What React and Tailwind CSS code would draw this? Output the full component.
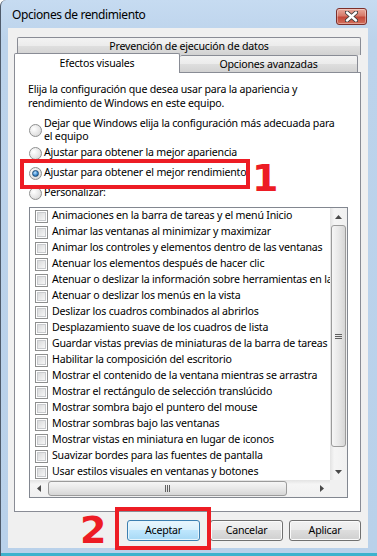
const items = [
  'Animaciones en la barra de tareas y el menú Inicio',
  'Animar las ventanas al minimizar y maximizar',
  'Animar los controles y elementos dentro de las ventanas',
  'Atenuar los elementos después de hacer clic',
  'Atenuar o deslizar la información sobre herramientas en la vista',
  'Atenuar o deslizar los menús en la vista',
  'Deslizar los cuadros combinados al abrirlos',
  'Desplazamiento suave de los cuadros de lista',
  'Guardar vistas previas de miniaturas de la barra de tareas',
  'Habilitar la composición del escritorio',
  'Mostrar el contenido de la ventana mientras se arrastra',
  'Mostrar el rectángulo de selección translúcido',
  'Mostrar sombra bajo el puntero del mouse',
  'Mostrar sombras bajo las ventanas',
  'Mostrar vistas en miniatura en lugar de iconos',
  'Suavizar bordes para las fuentes de pantalla',
  'Usar estilos visuales en ventanas y botones',
]

const Radio = ({ checked }) => (
  <span className="flex h-[13px] w-[13px] shrink-0 items-center justify-center rounded-full border border-[#8e8f8f] bg-[radial-gradient(circle_at_35%_35%,#ffffff,#e6e6e6_55%,#cdcdcd)]">
    {checked && (
      <span className="h-[7px] w-[7px] rounded-full border border-[#1d4d78] bg-[radial-gradient(circle_at_40%_35%,#c4e6ff,#3c8bd2_55%,#184a77)]" />
    )}
  </span>
)

const Checkbox = () => (
  <span className="flex h-[13px] w-[13px] shrink-0 items-center justify-center border border-[#8e8f8f] bg-white">
    <span className="h-[9px] w-[9px] border border-[#c9cbce] bg-[linear-gradient(135deg,#d9dadb,#f7f7f7)]" />
  </span>
)

const Arrow = ({ dir }) => {
  const pts = {
    up: '0,4 3.5,0 7,4',
    down: '0,0 3.5,4 7,0',
    left: '4,0 0,3.5 4,7',
    right: '0,0 4,3.5 0,7',
  }[dir]
  const vertical = dir === 'up' || dir === 'down'
  return (
    <svg width={vertical ? 7 : 4} height={vertical ? 4 : 7} viewBox={vertical ? '0 0 7 4' : '0 0 4 7'}>
      <polygon points={pts} fill="#4a4a4a" />
    </svg>
  )
}

export default function App() {
  return (
    <div className="relative flex h-[556px] w-[377px] flex-col overflow-hidden rounded-tl-[6px] border-l border-[#4f5b6b] bg-[linear-gradient(#c6dbf1,#bcd3eb_40px,#b9d1ea)] font-['Noto_Sans',sans-serif] text-[10.6px] tracking-[-0.2px] text-black">
      {/* title bar */}
      <div className="flex h-[28px] shrink-0 justify-between">
        <span className="pl-[11px] pt-[6px] text-[12px] leading-[18px] tracking-[-0.4px]">Opciones de rendimiento</span>
        <div className="mr-[10px] mt-[8px] flex h-[17px] w-[31px] items-center justify-center rounded-[3px] border border-[#7d2f2a] bg-[linear-gradient(#e9a99c,#d67a6a_45%,#c4483a_55%,#d2705c)] shadow-[inset_0_0_0_1px_rgba(255,255,255,0.35)]">
          <svg width="13" height="11" viewBox="0 0 13 11">
            <path d="M2 1.5 L11 9.5 M11 1.5 L2 9.5" stroke="#3a3a3a" strokeWidth="4.2" strokeLinecap="round" />
            <path d="M2 1.5 L11 9.5 M11 1.5 L2 9.5" stroke="#ffffff" strokeWidth="2.4" strokeLinecap="round" />
          </svg>
        </div>
      </div>

      {/* client */}
      <div className="ml-[7px] flex h-[520px] w-[360px] shrink-0 flex-col bg-[#f0f0f0] pl-[6px] pt-[9px]">
        {/* tabs */}
        <div className="flex h-[35px] shrink-0 flex-col">
          <div className="ml-[3px] flex h-[18px] w-[344px] shrink-0 items-center justify-center rounded-t-[2px] border border-b-0 border-[#898c95] bg-[linear-gradient(#f3f3f3,#ebebeb_50%,#dedede_50%,#d2d2d2)]">
            Prevención de ejecución de datos
          </div>
          <div className="-mt-[2px] flex h-[19px] items-start">
            <div className="relative z-10 flex h-[20px] w-[166px] items-center justify-center rounded-t-[2px] border border-b-0 border-[#898c95] bg-white">
              Efectos visuales
            </div>
            <div className="mt-[2px] flex h-[17px] w-[178px] items-center justify-center rounded-t-[2px] border border-b-0 border-l-0 border-[#898c95] bg-[linear-gradient(#f3f3f3,#ebebeb_50%,#dedede_50%,#d2d2d2)] pt-[2px]">
              Opciones avanzadas
            </div>
          </div>
        </div>

        {/* panel */}
        <div className="flex h-[440px] w-[347px] shrink-0 flex-col border border-[#898c95] bg-white pl-[13px] pt-[9px]">
          <p className="whitespace-nowrap leading-[14px]">
            Elija la configuración que desea usar para la apariencia y
            <br />
            rendimiento de Windows en este equipo.
          </p>

          <div className="ml-px mt-[7px] flex flex-col">
            <div className="flex h-[26px] items-center gap-[2px]">
              <Radio />
              <span className="whitespace-nowrap leading-[13px]">
                Dejar que Windows elija la configuración más adecuada para
                <br />
                el equipo
              </span>
            </div>
            <div className="flex h-[20px] items-center gap-[2px]">
              <Radio />
              <span>Ajustar para obtener la mejor apariencia</span>
            </div>
            <div className="flex h-[20px] items-center gap-[2px]">
              <Radio checked />
              <span>Ajustar para obtener el mejor rendimiento</span>
            </div>
            <div className="flex h-[20px] items-center gap-[2px]">
              <Radio />
              <span>Personalizar:</span>
            </div>
          </div>

          {/* list */}
          <div className="ml-px mt-[4px] flex h-[291px] w-[319px] flex-col border border-[#828790] bg-white">
            <div className="flex h-[272px]">
              <div className="w-[300px] overflow-hidden">
                {items.map((t) => (
                  <div key={t} className="flex h-[16px] items-center gap-[4px] whitespace-nowrap pl-[5px]">
                    <Checkbox />
                    <span>{t}</span>
                  </div>
                ))}
              </div>
              <div className="flex w-[17px] flex-col bg-[linear-gradient(90deg,#e3e3e3,#f5f5f5_25%,#f0f0f0)]">
                <div className="flex h-[17px] items-center justify-center">
                  <Arrow dir="up" />
                </div>
                <div className="mx-px flex h-[222px] items-center justify-center rounded-[3px] border border-[#9b9b9b] bg-[linear-gradient(90deg,#f6f6f6,#e8e8e8_50%,#d6d6d6)]">
                  <svg width="7" height="5" viewBox="0 0 7 5">
                    <path d="M0 0.5H7M0 2.5H7M0 4.5H7" stroke="#606060" strokeWidth="1" />
                  </svg>
                </div>
                <div className="flex-1" />
                <div className="flex h-[17px] items-center justify-center">
                  <Arrow dir="down" />
                </div>
              </div>
            </div>
            <div className="flex h-[17px]">
              <div className="flex w-[300px] items-center bg-[linear-gradient(#e3e3e3,#f5f5f5_25%,#f0f0f0)]">
                <div className="flex h-[17px] w-[17px] items-center justify-center">
                  <Arrow dir="left" />
                </div>
                <div className="ml-px flex h-[15px] w-[239px] items-center justify-center rounded-[3px] border border-[#9b9b9b] bg-[linear-gradient(#f6f6f6,#e8e8e8_50%,#d6d6d6)]">
                  <svg width="5" height="7" viewBox="0 0 5 7">
                    <path d="M0.5 0V7M2.5 0V7M4.5 0V7" stroke="#606060" strokeWidth="1" />
                  </svg>
                </div>
                <div className="flex-1" />
                <div className="flex h-[17px] w-[17px] items-center justify-center">
                  <Arrow dir="right" />
                </div>
              </div>
              <div className="w-[17px] bg-[#f0f0f0]" />
            </div>
          </div>
        </div>

        {/* buttons */}
        <div className="mt-[8px] flex items-start pl-[113px]">
          <button className="h-[21px] w-[73px] rounded-[3px] border border-[#3c7fb1] bg-[linear-gradient(#eaf6fd,#d9f0fc_45%,#bee6fd_50%,#a7d9f5)] shadow-[inset_0_0_0_1px_#e6f5fd]">
            Aceptar
          </button>
          <button className="ml-[10px] h-[21px] w-[73px] rounded-[3px] border border-[#707070] bg-[linear-gradient(#f2f2f2,#ebebeb_45%,#dddddd_50%,#cfcfcf)] shadow-[inset_0_0_0_1px_#fbfbfb]">
            Cancelar
          </button>
          <button className="ml-[6px] h-[21px] w-[72px] rounded-[3px] border border-[#707070] bg-[linear-gradient(#f2f2f2,#ebebeb_45%,#dddddd_50%,#cfcfcf)] shadow-[inset_0_0_0_1px_#fbfbfb]">
            Aplicar
          </button>
        </div>
      </div>

      <div className="mt-[5px] h-[3px] shrink-0 bg-[#3db2cd]" />

      {/* annotations */}
      <div className="absolute left-[19px] top-[159px] h-[30px] w-[230px] border-[4px] border-[#ed1c24]" />
      <span className="absolute left-[251px] top-[159px] font-['DejaVu_Sans',sans-serif] text-[38px] font-bold leading-none tracking-normal text-[#ed1c24]">1</span>
      <div className="absolute left-[114px] top-[507px] h-[43px] w-[96px] border-[4px] border-[#ed1c24]" />
      <span className="absolute left-[79px] top-[511px] font-['DejaVu_Sans',sans-serif] text-[38px] font-bold leading-none tracking-normal text-[#ed1c24]">2</span>
    </div>
  )
}
